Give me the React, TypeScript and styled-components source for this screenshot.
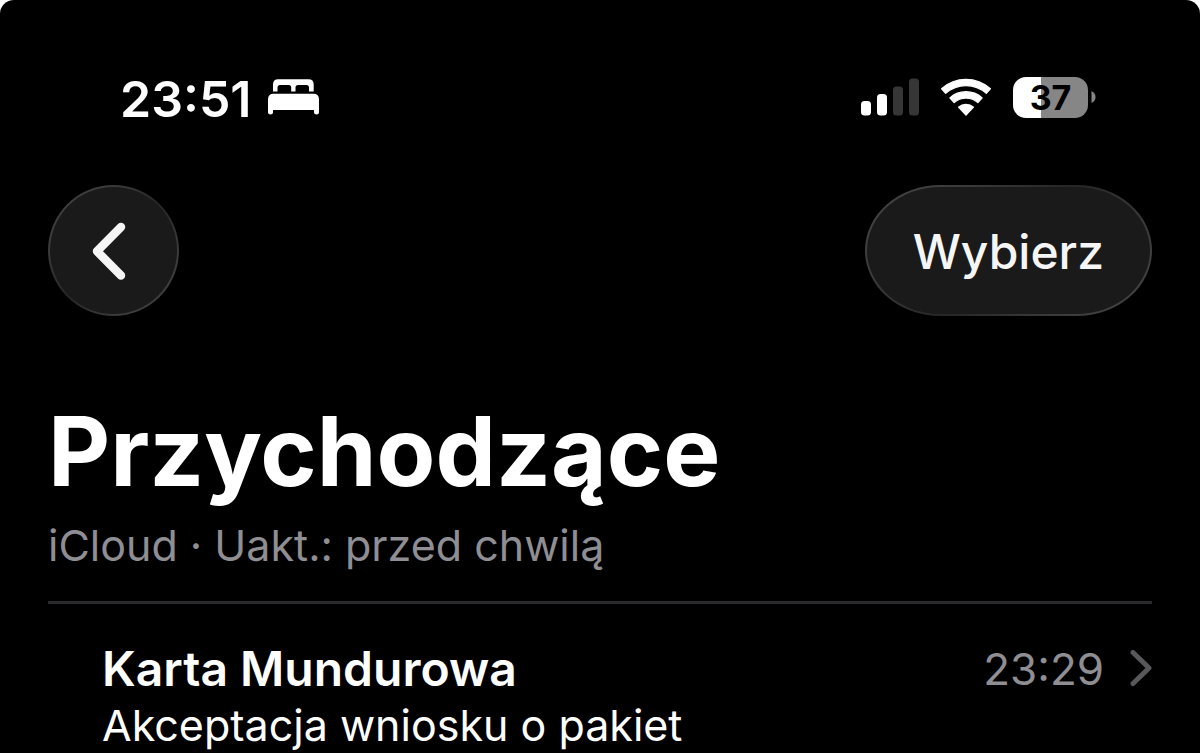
import React from "react";
import styled, { createGlobalStyle } from "styled-components";

const GlobalStyle = createGlobalStyle`
  *, *::before, *::after { box-sizing: border-box; }
  html, body { margin: 0; background: #ffffff; }
  body { overflow-x: hidden; }
`;

const Screen = styled.div`
  min-height: 100vh;
  padding: 69px 48px 0;
  border-radius: 14px 14px 0 0;
  background: #000000;
  color: #ffffff;
  font-family: Inter, "Liberation Sans", sans-serif;
`;

const StatusBar = styled.div`
  display: flex;
  align-items: center;
  justify-content: space-between;
  height: 56px;
  padding: 0 56px 0 72px;
`;

const StatusGroup = styled.div<{ $gap: number }>`
  display: flex;
  align-items: center;
  gap: ${(p) => p.$gap}px;
`;

const Clock = styled.time`
  padding-top: 3px;
  font-size: 50px;
  line-height: 56px;
  font-weight: 600;
`;

const Icon = styled.svg`
  display: block;
  flex: none;
`;

const Battery = styled.div`
  display: flex;
  align-items: center;
  gap: 3px;
`;

const BatteryBody = styled.div<{ $level: number }>`
  display: flex;
  align-items: center;
  justify-content: center;
  width: 75px;
  height: 41px;
  border-radius: 13px;
  background: linear-gradient(to right, #ffffff ${(p) => p.$level}%, #868686 ${(p) => p.$level}%);
  color: #000000;
  font-size: 34px;
  line-height: 41px;
  font-weight: 700;
`;

const Toolbar = styled.nav`
  display: flex;
  align-items: center;
  justify-content: space-between;
  margin-top: 60px;
`;

const GlassButton = styled.button<{ $round?: boolean }>`
  display: flex;
  align-items: center;
  justify-content: center;
  height: 131px;
  width: ${(p) => (p.$round ? "131px" : "auto")};
  padding: ${(p) => (p.$round ? "0" : "2px 46px 0")};
  border: 2px solid transparent;
  border-radius: ${(p) => (p.$round ? "50%" : "76px / 66px")};
  background:
    linear-gradient(#1a1a1a, #1a1a1a) padding-box,
    linear-gradient(135deg, #464646 0%, #3a3a3a 25%, #262626 50%, #3a3a3a 75%, #464646 100%) border-box;
  color: #f5f5f5;
  font-family: inherit;
  font-size: 48px;
  line-height: 60px;
  font-weight: 500;
  cursor: pointer;
`;

const Header = styled.header`
  margin-top: 75px;
  padding-bottom: 29px;
  border-bottom: 3px solid #2a2a2c;
`;

const Title = styled.h1`
  margin: 0;
  font-size: 96px;
  line-height: 120px;
  font-weight: 700;
`;

const Subtitle = styled.p`
  margin: 7px 0 0;
  color: #8e8e93;
  font-size: 43px;
  line-height: 54px;
`;

const MessageList = styled.ul`
  margin: 0;
  padding: 0;
  list-style: none;
`;

const MessageLink = styled.a`
  display: block;
  padding: 36px 0 0 54px;
  color: inherit;
  text-decoration: none;
`;

const MessageTop = styled.div`
  display: flex;
  align-items: center;
  justify-content: space-between;
`;

const Sender = styled.h2`
  margin: 0;
  font-size: 48px;
  line-height: 58px;
  font-weight: 600;
`;

const MessageMeta = styled.div`
  display: flex;
  align-items: center;
  gap: 26px;
  color: #8e8e93;
  font-size: 44px;
  line-height: 58px;
`;

const Preview = styled.p`
  margin: 0;
  font-size: 43px;
  line-height: 54px;
`;

const BedIcon = () => (
  <Icon width="53" height="36" viewBox="0 0 53 36" fill="#fff" aria-hidden="true">
    <path d="M6 12.5V5.5Q6 0.3 11.200 0.300H41.500Q46.700 0.300 46.700 5.500V12.500H42V8.500Q42 6 39.500 6H31Q28.500 6 28.500 8.500V12.500H24.200V8.500Q24.200 6 21.700 6H13Q10.500 6 10.500 8.500V12.500Z" />
    <path d="M1 33.500V20.500Q1 14.700 6.500 14.700H46.500Q52 14.700 52 20.500V33.500Q52 35.500 49.500 35.500Q47 35.500 47 33.500V31H6V33.500Q6 35.500 3.500 35.500Q1 35.500 1 33.500Z" />
  </Icon>
);

const SignalIcon = () => (
  <Icon width="58" height="38" viewBox="0 0 58 38" role="img" aria-label="Sygnał">
    <rect x="0" y="23" width="10" height="14.500" rx="3.500" fill="#fff" />
    <rect x="16" y="16" width="10" height="21.500" rx="3.500" fill="#fff" />
    <rect x="32" y="8.500" width="10" height="29" rx="3.500" fill="#363636" />
    <rect x="48" y="0.500" width="10" height="37" rx="3.500" fill="#363636" />
  </Icon>
);

const WifiIcon = () => (
  <Icon
    width="52"
    height="40"
    viewBox="0 0 52 40"
    fill="#fff"
    stroke="#fff"
    strokeWidth="1.200"
    strokeLinejoin="round"
    role="img"
    aria-label="Wi-Fi"
  >
    <path d="M1.600 11.800A36.500 36.500 0 0 1 50.400 11.800L46.300 16.400A30.300 30.300 0 0 0 5.700 16.400Z" />
    <path d="M9.800 20.900A24.200 24.200 0 0 1 42.200 20.900L37.900 25.600A17.800 17.800 0 0 0 14.100 25.600Z" />
    <path d="M18.500 30.100A11.500 11.500 0 0 1 33.500 30.100L26 38Z" />
  </Icon>
);

const BatteryNub = () => (
  <Icon width="5" height="12" viewBox="0 0 5 12" fill="#868686" aria-hidden="true">
    <path d="M0.500 0Q4.500 2 4.500 6T0.500 12Z" />
  </Icon>
);

const BackIcon = () => (
  <Icon
    width="44"
    height="58"
    viewBox="0 0 44 58"
    fill="none"
    stroke="#f5f5f5"
    strokeWidth="8.500"
    strokeLinecap="round"
    strokeLinejoin="round"
    aria-hidden="true"
  >
    <path d="M29 5L5 29.200L29 53.500" />
  </Icon>
);

const DisclosureIcon = () => (
  <Icon
    width="22"
    height="38"
    viewBox="0 0 22 38"
    fill="none"
    stroke="#58585c"
    strokeWidth="5"
    strokeLinecap="round"
    strokeLinejoin="round"
    aria-hidden="true"
  >
    <path d="M3 2.500L19 18L3 33.500" />
  </Icon>
);

const messages = [
  { sender: "Karta Mundurowa", time: "23:29", preview: "Akceptacja wniosku o pakiet" },
];

export default function App() {
  return (
    <>
      <GlobalStyle />
      <Screen>
        <StatusBar>
          <StatusGroup $gap={15}>
            <Clock>23:51</Clock>
            <BedIcon />
          </StatusGroup>
          <StatusGroup $gap={21}>
            <SignalIcon />
            <WifiIcon />
            <Battery>
              <BatteryBody $level={37}>37</BatteryBody>
              <BatteryNub />
            </Battery>
          </StatusGroup>
        </StatusBar>
        <Toolbar>
          <GlassButton type="button" $round aria-label="Wstecz">
            <BackIcon />
          </GlassButton>
          <GlassButton type="button">Wybierz</GlassButton>
        </Toolbar>
        <main>
          <Header>
            <Title>Przychodzące</Title>
            <Subtitle>iCloud · Uakt.: przed chwilą</Subtitle>
          </Header>
          <MessageList>
            {messages.map((m) => (
              <li key={m.sender}>
                <MessageLink href="#">
                  <MessageTop>
                    <Sender>{m.sender}</Sender>
                    <MessageMeta>
                      <time>{m.time}</time>
                      <DisclosureIcon />
                    </MessageMeta>
                  </MessageTop>
                  <Preview>{m.preview}</Preview>
                </MessageLink>
              </li>
            ))}
          </MessageList>
        </main>
      </Screen>
    </>
  );
}
